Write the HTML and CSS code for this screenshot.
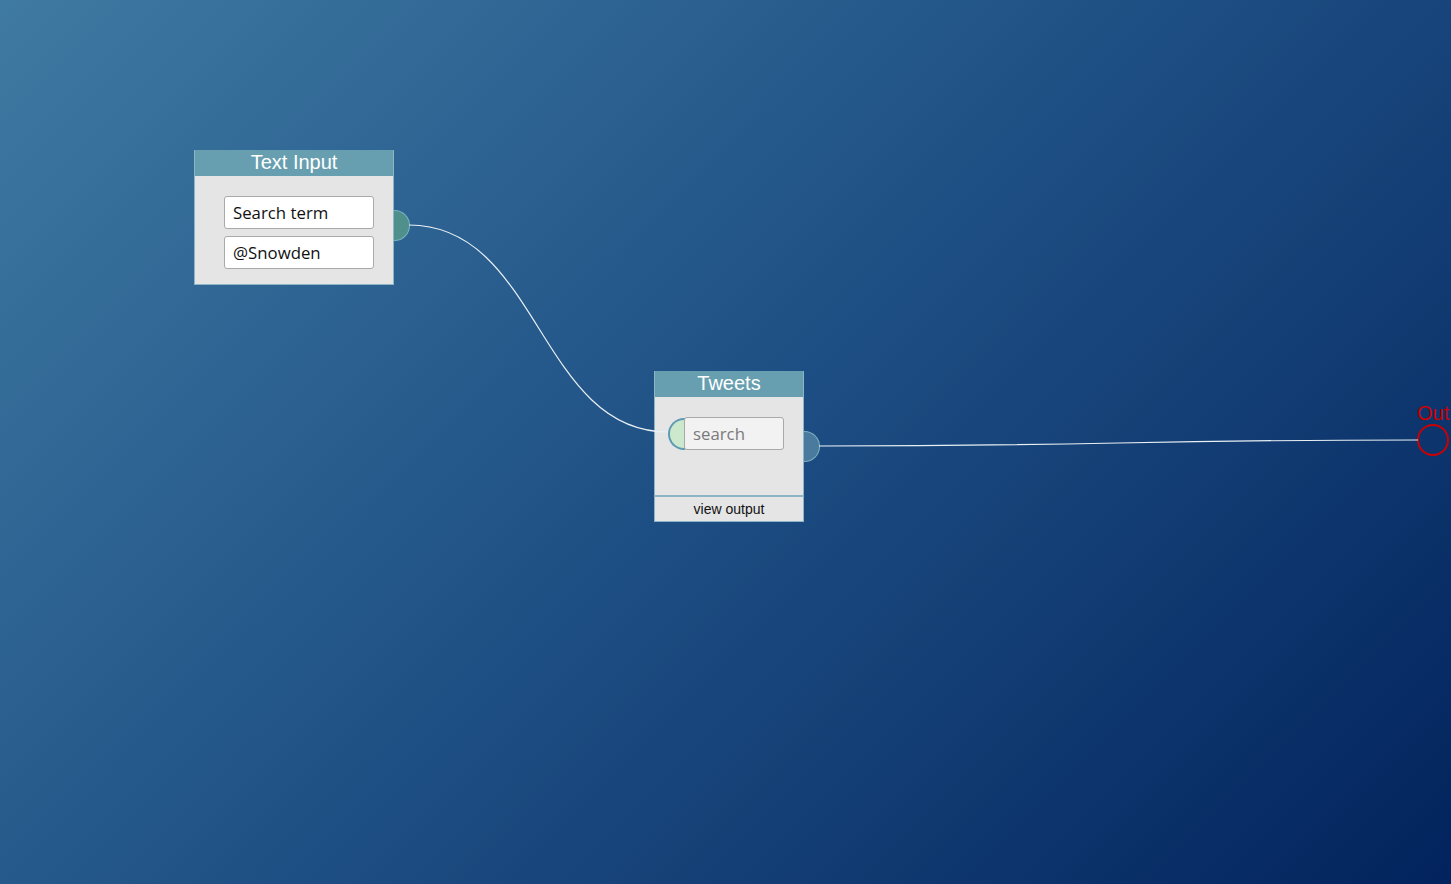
FILE: index.html
```html
<!DOCTYPE html>
<html lang="en">

<head>
    <meta charset="UTF-8">
    <meta name="viewport" content="width=device-width, initial-scale=1.0">
    <title>Flow</title>
    <link rel="stylesheet" href="styles.css">
</head>

<body>
    <div class="canvas">
        <div class="node node-text">
            <div class="node-title">Text Input</div>
            <div class="node-body">
                <input class="field" type="text" value="Search term">
                <input class="field" type="text" value="@Snowden">
            </div>
            <div class="port port-out port-teal"></div>
        </div>

        <div class="node node-tweets">
            <div class="node-title">Tweets</div>
            <div class="node-body">
                <div class="param">
                    <div class="port-in"></div>
                    <input class="field field-param" type="text" placeholder="search">
                </div>
            </div>
            <div class="node-footer">view output</div>
            <div class="port port-out port-blue"></div>
        </div>

        <div class="out">
            <div class="out-label">Out</div>
            <div class="out-port"></div>
        </div>

        <!-- провода поверх узлов -->
        <svg class="wires" width="1451" height="884">
            <path d="M409 225 C 539 225 539 432 668 432" />
            <path d="M819 446 C 1118 446 1118 440 1418 440" />
        </svg>
    </div>
</body>

</html>
```

FILE: styles.css
```css
html,
body {
    margin: 0;
    height: 100%;
}

body {
    background: linear-gradient(135deg, #3f7aa2 0%, #1e4f84 50%, #02235d 100%);
    font-family: "Liberation Sans", Arial, sans-serif;
    overflow: hidden;
}

.canvas {
    position: relative;
    width: 1451px;
    height: 884px;
}

.wires {
    position: absolute;
    left: 0;
    top: 0;
    pointer-events: none;
}

.wires path {
    fill: none;
    stroke: #e8f0f4;
    stroke-width: 1.2;
}

.node {
    position: absolute;
    box-sizing: border-box;
    border: 1px solid #8cb6c6;
    border-top: none;
    background-color: #e5e5e5;
}

.node-text {
    left: 194px;
    top: 150px;
    width: 200px;
}

.node-tweets {
    left: 654px;
    top: 371px;
    width: 150px;
}

.node-title {
    height: 26px;
    line-height: 25px;
    background-color: #679fb0;
    color: white;
    font-size: 20px;
    text-align: center;
}

.node-body {
    display: flex;
    flex-direction: column;
    gap: 7px;
    padding: 20px 0 15px 29px;
}

.node-tweets .node-body {
    height: 98px;
    box-sizing: border-box;
    padding: 20px 0 0 13px;
}

.field {
    box-sizing: border-box;
    width: 150px;
    height: 33px;
    margin: 0;
    padding: 0 8px;
    border: 1px solid #a9a9a9;
    border-radius: 3px;
    background-color: white;
    font-family: "Open Sans", "DejaVu Sans", sans-serif;
    font-size: 16.8px;
    color: #111;
    outline: none;
}

.param {
    display: flex;
    align-items: center;
}

.port-in {
    box-sizing: border-box;
    width: 17px;
    height: 32px;
    border: 2px solid #5e9bb3;
    border-right: none;
    border-radius: 16px 0 0 16px;
    background-color: #cde9cd;
}

.field-param {
    width: 100px;
    margin-left: -1px;
    background-color: #f2f2f2;
}

.field-param::placeholder {
    color: #7a7a7a;
}

.node-footer {
    height: 24px;
    line-height: 24px;
    border-top: 2px solid #8cb6c6;
    text-align: center;
    font-size: 14px;
    color: #111;
}

.port {
    position: absolute;
    box-sizing: border-box;
    width: 16px;
    height: 31px;
    right: -17px;
    border: 1px solid #7db2bf;
    border-left: none;
    border-radius: 0 16px 16px 0;
    top: 60px;
}

.port-teal {
    background-color: #4f8f8c;
}

.port-blue {
    background-color: #4a7a9d;
}

.out {
    position: absolute;
    left: 1417px;
    top: 402px;
    display: flex;
    flex-direction: column;
    align-items: flex-start;
}

.out-label {
    color: #cc0000;
    font-size: 20px;
    line-height: 22px;
}

.out-port {
    box-sizing: border-box;
    width: 32px;
    height: 32px;
    border: 2px solid #cc0000;
    border-radius: 50%;
}
```
